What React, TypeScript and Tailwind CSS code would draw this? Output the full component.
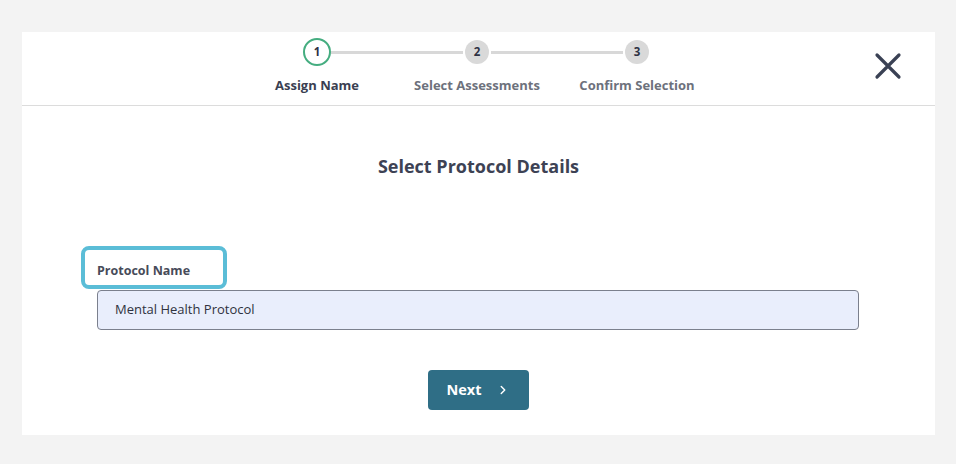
import React from 'react';
import { ChevronRight } from 'lucide-react';

const steps = [
  { n: 1, label: 'Assign Name', active: true },
  { n: 2, label: 'Select Assessments', active: false },
  { n: 3, label: 'Confirm Selection', active: false },
];

const App: React.FC = () => {
  return (
    <div className="w-[956px] h-[464px] bg-[#f3f3f3] pt-[32px] pl-[22px] pr-[21px] font-['Open_Sans',sans-serif]">
      <div className="bg-white h-[403px] flex flex-col">
        {/* Stepper header */}
        <div className="relative h-[74px] border-b border-[#dcdcdc] flex justify-center pt-[6px]">
          <div className="grid grid-cols-[160px_160px_160px] ml-[-3px]">
            {steps.map((s, i) => (
              <div key={s.n} className="flex flex-col items-center">
                <div className="flex items-center w-full h-[28px]">
                  <div className={`flex-1 h-[3px] ${i === 0 ? 'bg-transparent' : 'bg-[#d8d8d8]'}`} />
                  <div
                    className={
                      s.active
                        ? 'w-[28px] h-[28px] rounded-full border-2 border-[#45ad80] bg-white flex items-center justify-center text-[11.5px] font-bold text-[#2e3244]'
                        : 'w-[24px] h-[24px] mx-[2px] rounded-full bg-[#d9d9d9] flex items-center justify-center text-[11.5px] font-bold text-[#2e3244]'
                    }
                  >
                    {s.n}
                  </div>
                  <div className={`flex-1 h-[3px] ${i === steps.length - 1 ? 'bg-transparent' : 'bg-[#d8d8d8]'}`} />
                </div>
                <span
                  className={`mt-[11px] text-[13px] leading-[17px] font-bold ${s.active ? 'text-[#3a3f52]' : 'text-[#6d717c]'}`}
                >
                  {s.label}
                </span>
              </div>
            ))}
          </div>
          <button className="absolute right-[33px] top-[20px] w-[28px] h-[28px] flex items-center justify-center">
            <svg width="28" height="28" viewBox="0 0 28 28">
              <path d="M3 3 L25 25 M25 3 L3 25" stroke="#3a4154" strokeWidth="3.2" strokeLinecap="round" />
            </svg>
          </button>
        </div>

        {/* Body */}
        <div className="flex flex-col items-center pt-[48px]">
          <h2 className="text-[18px] font-bold text-[#3d4254] leading-[24px]">Select Protocol Details</h2>
        </div>

        <div className="pl-[59px] pr-[76px] mt-[68px]">
          <div className="flex items-center w-[146px] h-[43px] px-[12px] border-4 border-[#5bbdd7] rounded-[8px]">
            <span className="text-[12.5px] font-bold text-[#474b59] mt-[7px]">Protocol Name</span>
          </div>
          <div className="ml-[16px] h-[40px] mt-[1px] bg-[#e9eefc] border border-[#7b808d] rounded-[4px] flex items-center px-[17px]">
            <span className="text-[13px] text-[#2f3240]">Mental Health Protocol</span>
          </div>
        </div>

        <div className="flex justify-center mt-[40px] ml-[-1px]">
          <button className="w-[101px] h-[40px] bg-[#2f6e86] rounded-[4px] flex items-center justify-center gap-[14px] text-white">
            <span className="text-[14.5px] font-bold">Next</span>
            <ChevronRight size={14} strokeWidth={2.5} />
          </button>
        </div>
      </div>
    </div>
  );
};

export default App;
